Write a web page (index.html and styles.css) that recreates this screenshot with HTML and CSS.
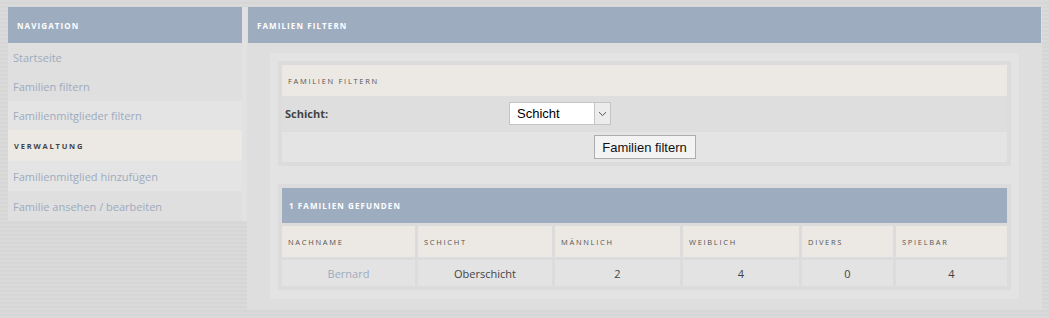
FILE: index.html
```html
<!DOCTYPE html>
<html lang="de">
<head>
<meta charset="utf-8">
<title>Familien filtern</title>
<link rel="stylesheet" href="styles.css">
</head>
<body>
<div class="page">
  <aside class="sidebar">
    <div class="side-inner">
      <div class="side-head">Navigation</div>
      <a class="nav-item h29" href="#">Startseite</a>
      <a class="nav-item h29" href="#">Familien filtern</a>
      <a class="nav-item h29 light" href="#">Familienmitglieder filtern</a>
      <div class="nav-section">Verwaltung</div>
      <a class="nav-item h30 light" href="#">Familienmitglied hinzufügen</a>
      <a class="nav-item h30" href="#">Familie ansehen / bearbeiten</a>
    </div>
  </aside>
  <main class="main">
    <div class="main-head">Familien filtern</div>
    <div class="content">
      <div class="wrap">
        <div class="formbox">
          <div class="form-head">Familien filtern</div>
          <div class="form-row">
            <label class="form-label">Schicht:</label>
            <span class="select">
              <select class="select-el"><option>Schicht</option></select>
              <span class="select-arrow"><svg width="9" height="6" viewBox="0 0 9 6"><path d="M1 1.2 L4.5 4.6 L8 1.2" fill="none" stroke="#555" stroke-width="1"/></svg></span>
            </span>
          </div>
          <div class="form-actions">
            <button class="btn" type="button">Familien filtern</button>
          </div>
        </div>
        <div class="resultbox">
          <table class="result">
            <colgroup>
              <col style="width:133px"><col style="width:134px"><col style="width:125px"><col style="width:116px"><col style="width:91px"><col>
            </colgroup>
            <thead>
              <tr><th class="res-head" colspan="6">1 Familien gefunden</th></tr>
              <tr class="cols"><th>Nachname</th><th>Schicht</th><th>Männlich</th><th>Weiblich</th><th>Divers</th><th>Spielbar</th></tr>
            </thead>
            <tbody>
              <tr><td><a href="#">Bernard</a></td><td>Oberschicht</td><td>2</td><td>4</td><td>0</td><td>4</td></tr>
            </tbody>
          </table>
        </div>
      </div>
    </div>
  </main>
</div>
</body>
</html>
```
FILE: styles.css
```css
* { box-sizing: border-box; }
html, body { height: 100%; }
body {
  margin: 0;
  padding: 7px 7px 0 8px;
  font-family: "Open Sans", "Noto Sans", sans-serif;
  background: repeating-linear-gradient(to bottom, #dadada 0 2px, #d6d6d6 2px 4px);
  color: #333;
}
.page {
  display: flex;
  align-items: flex-start;
}
.sidebar {
  width: 239px;
  padding-right: 5px;
  background: #e2e2e2;
  flex: none;
}
.side-inner { display: flex; flex-direction: column; }
.side-head, .main-head {
  height: 36px;
  background: #9eacbf;
  color: #fff;
  font-weight: 700;
  font-size: 8px;
  letter-spacing: 1.1px;
  text-transform: uppercase;
  display: flex;
  align-items: center;
  padding-left: 9px;
}
.nav-item {
  display: flex;
  align-items: center;
  padding-left: 5px;
  font-size: 11px;
  color: #9dabbe;
  text-decoration: none;
  background: #dfdfdf;
}
.nav-item.light { background: #e4e4e4; }
.h29 { height: 29px; }
.h30 { height: 30px; }
.nav-section {
  height: 31px;
  display: flex;
  align-items: center;
  padding-left: 6px;
  background: #ece9e5;
  color: #444;
  font-weight: 700;
  font-size: 7.5px;
  letter-spacing: 1.8px;
  text-transform: uppercase;
}
.main {
  flex: 1;
  background: #dedede;
  padding: 0 1px 11px 1px;
  min-height: 302px;
}
.content {
  padding: 10px 22px 0 22px;
}
.wrap {
  background: #e3e3e3;
  padding: 8px 8px 9px 8px;
  display: flex;
  flex-direction: column;
  gap: 18px;
}
.formbox {
  background: #dcdcdc;
  padding: 4px;
  display: flex;
  flex-direction: column;
}
.form-head {
  height: 31px;
  background: #ece9e5;
  color: #555;
  font-size: 7.5px;
  letter-spacing: 1.7px;
  text-transform: uppercase;
  display: flex;
  align-items: center;
  padding-left: 6px;
}
.form-row {
  height: 35px;
  display: grid;
  grid-template-columns: 227px 1fr;
  align-items: center;
  background: #dedede;
}
.form-label {
  font-size: 11px;
  font-weight: 700;
  color: #444;
  padding-left: 3px;
}
.select {
  display: inline-flex;
  width: 102px;
  height: 23px;
  background: #fff;
  border: 1px solid #c4c4c4;
}
.select-el {
  appearance: none;
  -webkit-appearance: none;
  border: 0;
  outline: 0;
  background: #fff;
  width: 84px;
  height: 21px;
  padding: 0 0 0 7px;
  font-family: "Liberation Sans", Arial, sans-serif;
  font-size: 13px;
  color: #000;
}
.select-arrow {
  flex: 1;
  display: flex;
  align-items: center;
  justify-content: center;
  background: #ececec;
  border-left: 1px solid #c4c4c4;
}
.form-actions {
  margin-top: 1px;
  height: 30px;
  background: #e4e4e4;
  display: flex;
  justify-content: center;
  align-items: center;
}
.btn {
  width: 102px;
  height: 24px;
  background: #f3f3f3;
  border: 1px solid #adadad;
  border-radius: 0;
  font-family: "Liberation Sans", Arial, sans-serif;
  font-size: 13px;
  color: #111;
  padding: 0;
}
.resultbox {
  background: #dcdcdc;
  padding: 1px;
}
.result {
  width: 100%;
  table-layout: fixed;
  border-collapse: separate;
  border-spacing: 3px;
}
.result th, .result td { padding: 0; }
.res-head {
  height: 35px;
  background: #9eacbf;
  color: #fff;
  font-weight: 700;
  font-size: 8px;
  letter-spacing: 1.1px;
  text-transform: uppercase;
  text-align: left;
  padding-left: 7px !important;
}
.cols th {
  height: 31px;
  background: #ece9e5;
  color: #555;
  font-weight: 400;
  font-size: 7.5px;
  letter-spacing: 1.7px;
  text-transform: uppercase;
  text-align: left;
  padding-left: 6px;
}
.result td {
  height: 26px;
  background: #e3e3e3;
  text-align: center;
  font-size: 11px;
  color: #444;
}
.result td a { color: #9dabbe; text-decoration: none; }
```
